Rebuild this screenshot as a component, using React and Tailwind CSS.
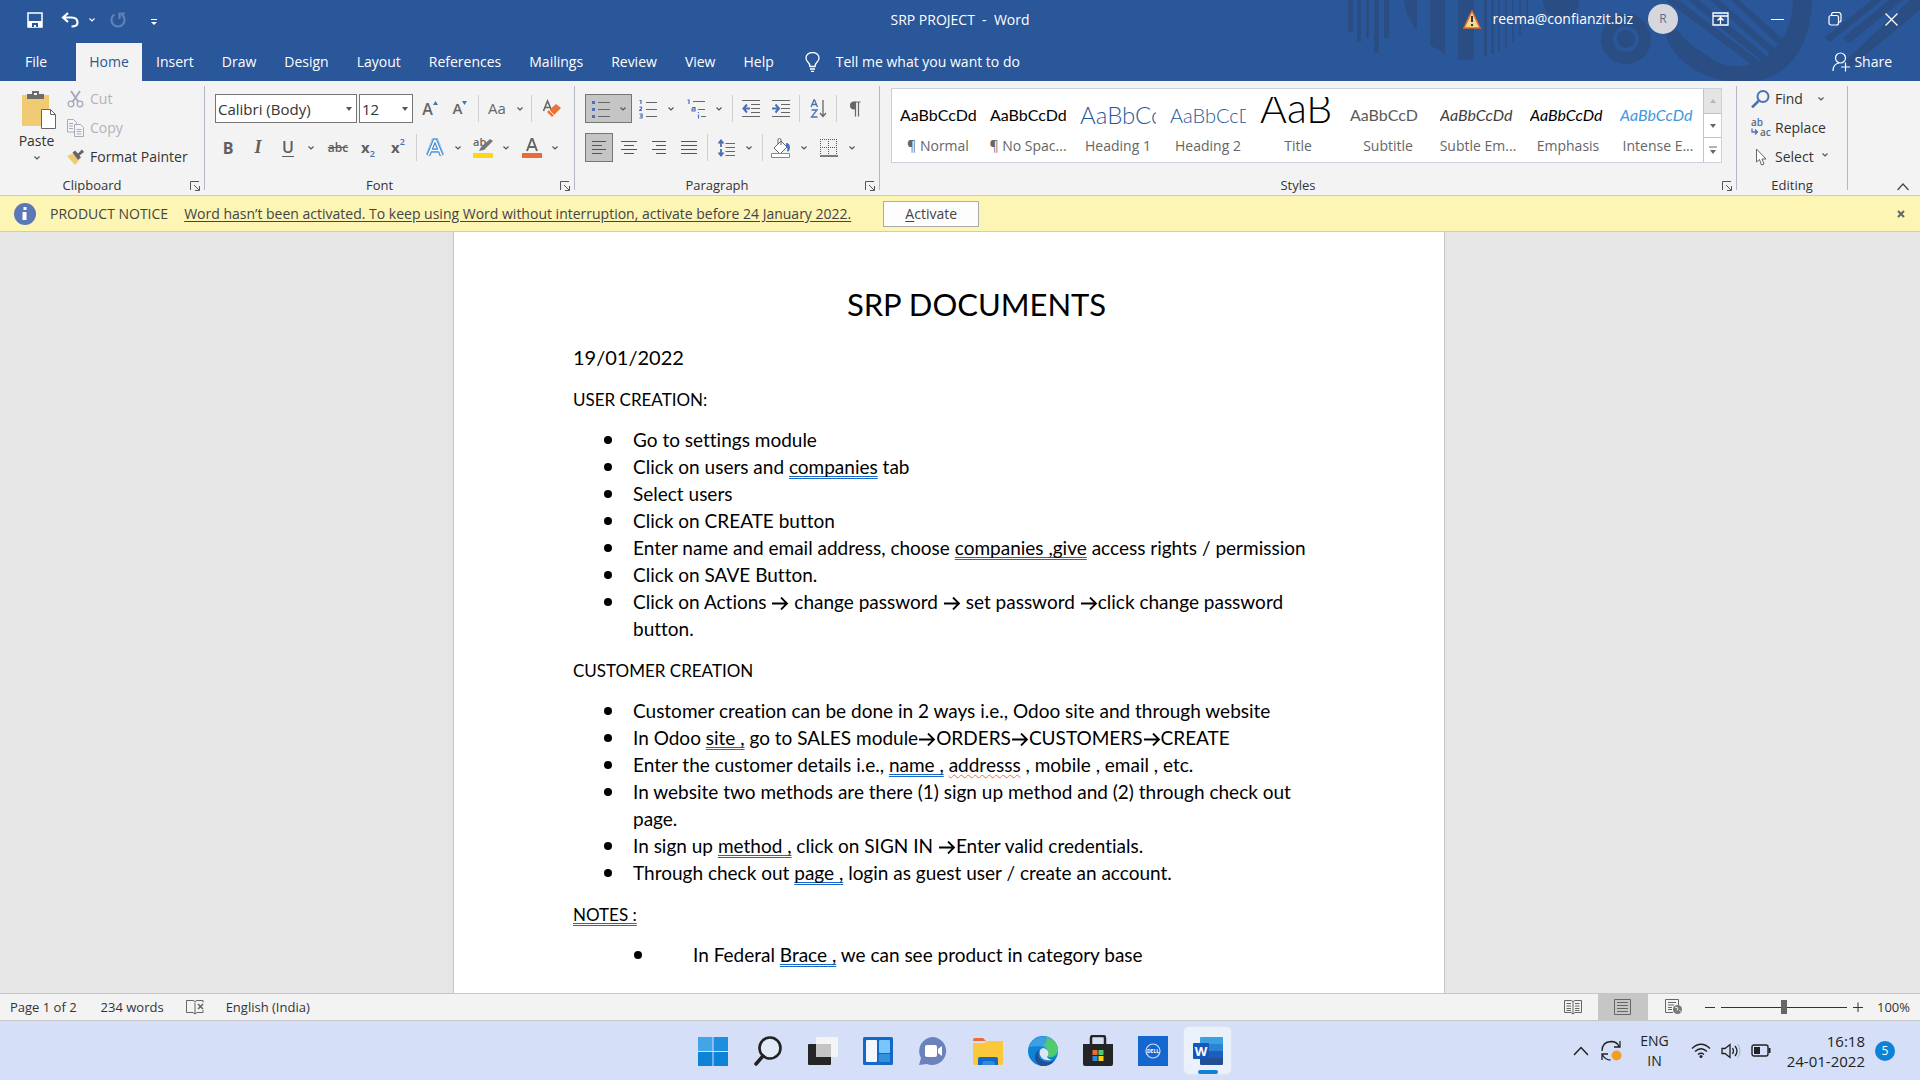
import React from "react";

const tabs = ["Insert", "Draw", "Design", "Layout", "References", "Mailings", "Review", "View", "Help"];

const styleCards = [
  { name: "¶ Normal", sample: "AaBbCcDd", look: "text-[16px] leading-[36px] text-black" },
  { name: "¶ No Spac...", sample: "AaBbCcDd", look: "text-[16px] leading-[36px] text-black" },
  { name: "Heading 1", sample: "AaBbCc", look: "text-[24px] leading-[36px] font-light text-[#1f5a9e]" },
  { name: "Heading 2", sample: "AaBbCcD", look: "text-[20px] leading-[36px] font-light text-[#1f5a9e]" },
  { name: "Title", sample: "AaB", look: "text-[41px] leading-[22px] font-light text-black" },
  { name: "Subtitle", sample: "AaBbCcD", look: "text-[16px] leading-[36px] text-[#5a5a5a]" },
  { name: "Subtle Em...", sample: "AaBbCcDd", look: "text-[16px] leading-[36px] italic text-[#404040]" },
  { name: "Emphasis", sample: "AaBbCcDd", look: "text-[16px] leading-[36px] italic text-black" },
  { name: "Intense E...", sample: "AaBbCcDd", look: "text-[16px] leading-[36px] italic text-[#3f97dc]" },
];

function Svg({ w, h, children, className = "" }) {
  return (
    <svg width={w} height={h} viewBox={`0 0 ${w} ${h}`} fill="none" className={`shrink-0 ${className}`}>
      {children}
    </svg>
  );
}

function Chevron({ className = "text-[#555]" }) {
  return (
    <Svg w={6} h={4} className={className}>
      <path d="M.5.5 3 3 5.5.5" stroke="currentColor" strokeWidth="1.2" />
    </Svg>
  );
}

function Tool({ label, children, active }) {
  return (
    <button
      aria-label={label}
      className={
        active
          ? "flex h-[29px] w-7 items-center justify-center border border-[#767676] bg-[#c5c5c5]"
          : "flex h-[29px] w-[30px] items-center justify-center"
      }
    >
      {children}
    </button>
  );
}

function Split({ label, children, active }) {
  return (
    <button
      aria-label={label}
      className={
        active
          ? "flex h-[29px] w-[47px] items-center border border-[#767676] bg-[#c5c5c5]"
          : "flex h-[29px] w-[46px] items-center"
      }
    >
      <span className="flex w-[30px] items-center justify-center">{children}</span>
      <span className="flex w-4 items-center justify-center">
        <Chevron />
      </span>
    </button>
  );
}

function Bar() {
  return <span className="mx-[3px] h-[27px] w-px bg-[#d0d0d4]" />;
}

function Launcher({ label }) {
  return (
    <button aria-label={label} className="absolute right-1 bottom-1">
      <Svg w={10} h={10}>
        <path d="M.5 9V.5H9M4 4l5 5M9.5 5v4.5H5" stroke="#555" />
      </Svg>
    </button>
  );
}

function Group({ title, launcher, className = "", children }) {
  return (
    <section className={`flex items-stretch ${className}`}>
      <div className="relative flex min-w-0 flex-1 flex-col pb-px">
        <div className="flex-1">{children}</div>
        <h2 className={`text-center text-[13px] leading-[18px] text-[#333] ${launcher ? "pr-5" : ""}`}>{title}</h2>
        {launcher && <Launcher label={`${title} settings`} />}
      </div>
      <div className="my-[5px] w-px bg-[#b4b8c4]" />
    </section>
  );
}

function Combo({ label, value, className }) {
  return (
    <div className={`relative mr-[2px] ${className}`}>
      <select
        aria-label={label}
        defaultValue={value}
        className="h-[29px] w-full appearance-none border border-[#767676] bg-white pl-[2px] text-[15px] leading-5 text-[#333]"
      >
        <option>{value}</option>
      </select>
      <Svg w={6} h={4} className="pointer-events-none absolute top-[13px] right-[5px]">
        <path d="M0 0h6L3 4z" fill="#555" />
      </Svg>
    </div>
  );
}

function TitleArt() {
  return (
    <svg width="580" height="81" viewBox="0 0 580 81" className="absolute top-0 right-0" fill="#2a4d83">
      <path d="M8 0h5v32H8zM17 0h4v42h-4zM26 0h3v38h-3zM34 0h5v53h-5zM44 0h5v38h-5zM64 0h13v30Q66 18 64 0z" />
      <path d="M90 0h15v54l-15-9zM118 0h16v60h-16zM144 0h3v56h-3zM151 0h3v54h-3zM158 0h2v51h-2zM165 0h2v48h-2zM172 0h2v42h-2zM179 0h2v36h-2zM186 0h2v26h-2z" />
      <path d="M203 0h36q0 17-18 19-17-2-18-19z" />
      <circle cx="286" cy="39" r="19" fill="none" stroke="#2a4d83" strokeWidth="12" />
      <circle cx="286" cy="39" r="9" />
      <path d="M324 30q8 32 46 47 28 9 58 1 42-18 44-78h-19q-1 41-34 62-30 11-51-6-24-14-30-26z" />
      <path d="M326 0h12l88 66-6 5zM348 0h10l76 62-5 5zM370 0h9l62 54-5 5zM391 0h8l49 44-5 5z" />
      <path d="m532 0-48 38 6 4 52-42zM549 0l-46 38 6 5 54-43zM570 0l-66 62 7 5 69-57V0z" />
    </svg>
  );
}

function TitleBar() {
  return (
    <div className="relative flex h-[43px] items-center text-white">
      <div className="flex flex-1 items-center pb-[3px]">
        <button aria-label="Save" className="ml-[27px]">
          <Svg w={16} h={16}>
            <path d="M1 1h14v14H1z" stroke="#fff" strokeWidth="1.5" />
            <path d="M1 9h14v6H1z" fill="#fff" />
            <path d="M5 11h6v4H9v-2H7v2H5z" fill="#2a569a" />
          </Svg>
        </button>
        <button aria-label="Undo" className="ml-[18px]">
          <Svg w={18} h={16}>
            <path d="M7 1 2 5.5 7 10M2.5 5.5h8q6 0 6 5 0 4-6 4" stroke="#fff" strokeWidth="2.2" />
          </Svg>
        </button>
        <button aria-label="Undo list" className="ml-[10px]">
          <Chevron className="text-white" />
        </button>
        <button aria-label="Redo" className="ml-[15px]">
          <Svg w={16} h={16}>
            <path d="M4.5 2.5A6.5 6.5 0 1 0 11.5 2.5M9.500 7V1.500H15" stroke="#5f80b8" strokeWidth="2.2" />
          </Svg>
        </button>
        <button aria-label="Customize toolbar" className="ml-[25px] pt-1">
          <Svg w={6} h={7}>
            <path d="M0 .5h6" stroke="#fff" />
            <path d="M0 3h6L3 6z" fill="#fff" />
          </Svg>
        </button>
      </div>
      <h1 className="pb-[3px] text-[14px] leading-5 whitespace-pre">SRP PROJECT  -  Word</h1>
      <div className="flex flex-1 items-center justify-end pb-[5px]">
        <Svg w={18} h={19}>
          <path d="M9 1l8 17H1z" fill="#f3d98a" stroke="#e0692f" strokeWidth="1.5" />
          <path d="M9 6v6M9 14v2" stroke="#333" strokeWidth="2" />
        </Svg>
        <span className="ml-3 text-[14px] leading-5">reema@confianzit.biz</span>
        <span className="ml-[15px] flex size-[30px] items-center justify-center rounded-full bg-[#d5d7dd] text-[12px] text-[#5f6d88]">
          R
        </span>
        <button aria-label="Ribbon display options" className="ml-[34px]">
          <Svg w={17} h={14}>
            <path d="M1 1h15v12H1zM1 4h15M8.5 12V6M5.5 8.5l3-3 3 3" stroke="#fff" strokeWidth="1.3" />
          </Svg>
        </button>
        <button aria-label="Minimize" className="ml-[42px]">
          <Svg w={13} h={13}>
            <path d="M0 6.5h13" stroke="#fff" />
          </Svg>
        </button>
        <button aria-label="Restore" className="ml-[44px]">
          <Svg w={14} h={14}>
            <rect x="1" y="3.5" width="9.5" height="9.5" rx="2" stroke="#fff" strokeWidth="1.2" />
            <path d="M3.5 3q0-2.500 2-2.500h5q2.500 0 2.500 2.500v5q0 2-2 2" stroke="#fff" strokeWidth="1.2" />
          </Svg>
        </button>
        <button aria-label="Close" className="mr-[22px] ml-[43px]">
          <Svg w={13} h={13}>
            <path d="m.5.5 12 12M12.500.5l-12 12" stroke="#fff" strokeWidth="1.3" />
          </Svg>
        </button>
      </div>
    </div>
  );
}

function TabRow() {
  return (
    <nav className="relative flex h-[38px] items-stretch text-[14px] leading-5 text-white">
      <button className="w-[76px] pr-1">File</button>
      <button className="w-[66px] bg-[#f3f3f3] text-[#2a569a]">Home</button>
      {tabs.map((t) => (
        <button key={t} className="px-[14px]">
          {t}
        </button>
      ))}
      <button className="ml-[17px] flex items-center gap-4">
        <Svg w={15} h={20}>
          <path
            d="M5 14.500Q5 12 2.500 9.500 1 8 1 6a6.500 5.500 0 0 1 13 0q0 2-1.500 3.500Q10 12 10 14.500zM5 17h5M6 19.300h3"
            stroke="#fff"
            strokeWidth="1.3"
          />
        </Svg>
        Tell me what you want to do
      </button>
      <button className="mr-[28px] ml-auto flex items-center gap-1">
        <Svg w={18} h={20}>
          <circle cx="8.5" cy="6" r="5" stroke="#fff" strokeWidth="1.2" />
          <path d="M1 19q0-7 6-8M13.500 10.500v9M9 15h9" stroke="#fff" strokeWidth="1.2" />
        </Svg>
        Share
      </button>
    </nav>
  );
}

function Clipboard() {
  return (
    <Group title="Clipboard" launcher className="w-[205px]">
      <div className="flex">
        <button className="flex w-[67px] flex-col items-center pt-[9px] pl-[6px] text-[14px] leading-5 text-[#333]">
          <Svg w={36} h={39} className="ml-1">
            <path d="M1 5h27v31H1z" fill="#f0cb74" />
            <path d="M6 9V4h5V1h7v3h5v5z" fill="#6d6d6d" />
            <path d="M13 3h3v2h-3z" fill="#f3f3f3" />
            <path d="M20.500 19.500h9l5 5v14h-14z" fill="#fff" stroke="#666" />
            <path d="M29.500 19.500v5h5" stroke="#666" />
          </Svg>
          <span className="pt-[2px]">Paste</span>
          <span className="pt-[5px]">
            <Chevron />
          </span>
        </button>
        <div className="flex flex-col pt-[3px] text-[14px] leading-5">
          <button className="flex h-[29px] items-center gap-[6px] text-[#b0b3bd]">
            <Svg w={17} h={18}>
              <path d="M4 1l7.500 11M13 1 5.500 12" stroke="#a6abba" strokeWidth="2" />
              <circle cx="4" cy="14" r="2.8" stroke="#a6abba" strokeWidth="1.3" />
              <circle cx="13" cy="14" r="2.8" stroke="#a6abba" strokeWidth="1.3" />
            </Svg>
            Cut
          </button>
          <button className="flex h-[29px] items-center gap-[6px] text-[#b0b3bd]">
            <Svg w={17} h={18}>
              <path d="M.5.5h6l3 3V13h-9z" fill="#f6f6f6" stroke="#a6abba" />
              <path d="M7.500 5.500h6l3 3v9h-9z" fill="#f6f6f6" stroke="#a6abba" />
              <path d="M2 4.500h4M2 7h4M2 9.500h4M9.500 10.500h5M9.500 12.500h5M9.500 15h5" stroke="#a6abba" />
            </Svg>
            Copy
          </button>
          <button className="flex h-[29px] items-center gap-[6px] text-[#333]">
            <Svg w={17} h={16}>
              <path d="M0 7 6 4.500l6 6.500-4 5z" fill="#f0cb74" />
              <path d="m5.500 3.500 2.500-2 3 3L15 .5 17 3l-4.500 3.500 1.500 2-3 2.500z" fill="#666" />
            </Svg>
            Format Painter
          </button>
        </div>
      </div>
    </Group>
  );
}

function FontGroup() {
  return (
    <Group title="Font" launcher className="w-[370px]">
      <div className="flex items-center pt-[13px] pl-[10px] text-[#666]">
        <Combo label="Font name" value="Calibri (Body)" className="w-[142px]" />
        <Combo label="Font size" value="12" className="w-[54px]" />
        <Tool label="Grow font">
          <span className="text-[16px] font-semibold">A</span>
          <Svg w={5} h={16}>
            <path d="M0 4h5L2.500 0z" fill="#4a70b5" />
          </Svg>
        </Tool>
        <Tool label="Shrink font">
          <span className="text-[15px] font-semibold">A</span>
          <Svg w={5} h={16}>
            <path d="M0 0h5L2.500 4z" fill="#4a70b5" />
          </Svg>
        </Tool>
        <Bar />
        <Split label="Change case">
          <span className="text-[15px]">Aa</span>
        </Split>
        <Bar />
        <span className="w-[2px]" />
        <Tool label="Clear formatting">
          <Svg w={20} h={20}>
            <path d="M1.500 12 5.500 2 9 10M3 8.500h5" stroke="#666" strokeWidth="1.6" />
            <path d="m14 5 5 4-9 9-5-5z" fill="#e8743b" />
            <path d="m7 11 5 5" stroke="#f3f3f3" />
          </Svg>
        </Tool>
      </div>
      <div className="flex items-center pt-[10px] pl-2 text-[#5f5f5f]">
        <Tool label="Bold">
          <b className="text-[16px]">B</b>
        </Tool>
        <Tool label="Italic">
          <i className="font-['Liberation_Serif',serif] text-[18px] font-bold">I</i>
        </Tool>
        <Split label="Underline">
          <span className="border-b border-[#5f5f5f] text-[16px] leading-[17px] font-semibold">U</span>
        </Split>
        <span className="w-1" />
        <Tool label="Strikethrough">
          <s className="text-[12px] font-semibold">abc</s>
        </Tool>
        <Tool label="Subscript">
          <b className="text-[15px]">x</b>
          <span className="pt-3 text-[9px] leading-3 font-semibold text-[#4a70b5]">2</span>
        </Tool>
        <Tool label="Superscript">
          <b className="text-[15px]">x</b>
          <span className="pb-3 text-[9px] leading-3 font-semibold text-[#4a70b5]">2</span>
        </Tool>
        <Bar />
        <Split label="Text effects">
          <Svg w={18} h={20}>
            <path d="M2 17.500 8 2h2l6 15.500M5 12.500h8" stroke="#9cc4ec" strokeWidth="5" />
            <path d="M2.500 17 8.500 2.500h1L15.500 17M5 12.500h8" stroke="#3f8ad0" strokeWidth="3.6" />
            <path d="M2.500 17 8.500 2.500h1L15.500 17M5 12.500h8" stroke="#fff" strokeWidth="1.6" />
          </Svg>
        </Split>
        <span className="w-[2px]" />
        <Split label="Highlight colour">
          <Svg w={20} h={20}>
            <text x="0" y="8" fontSize="11" fontWeight="600" fill="#666" fontFamily="Open Sans, sans-serif">
              ab
            </text>
            <path d="m6 13 2-4L17 1l3 2-9 9z" fill="#777" />
            <path d="M0 15h20v5H0z" fill="#ffd613" />
          </Svg>
        </Split>
        <span className="w-[3px]" />
        <Split label="Font colour">
          <Svg w={20} h={20}>
            <path d="M5 13 9.500 1h1L15 13M6.500 9h7" stroke="#666" strokeWidth="2" />
            <path d="M0 15h20v5H0z" fill="#ea6b35" />
          </Svg>
        </Split>
      </div>
    </Group>
  );
}

function Paragraph() {
  return (
    <Group title="Paragraph" launcher className="w-[305px]">
      <div className="flex items-center pt-[13px] pl-[10px]">
        <Split label="Bullets" active>
          <Svg w={18} h={18}>
            <path d="M6 2.500h12M6 9.500h12M6 16.500h12" stroke="#666" />
            <path d="M0 1h3v3H0zM0 8h3v3H0zM0 15h3v3H0z" fill="#4a70b5" />
          </Svg>
        </Split>
        <span className="w-px" />
        <Split label="Numbering">
          <Svg w={18} h={20}>
            <path d="M7 3.500h11M7 10.500h11M7 17.500h11" stroke="#666" />
            <path d="M.5 1.500H2V5M.5 8h2v1.500l-2 2H3M.5 15h2.500v4H.5M1 17h2" stroke="#4a70b5" strokeWidth="1.2" />
          </Svg>
        </Split>
        <span className="w-[2px]" />
        <Split label="Multilevel list">
          <Svg w={19} h={20}>
            <path d="M6 2.500h12M11 10.500h7M14 17.500h5" stroke="#666" />
            <path d="M.5 1H2v4M5 8.500h3V12H5v-2h3M11.500 15.500v4M11.500 13v1" stroke="#4a70b5" strokeWidth="1.2" />
          </Svg>
        </Split>
        <span className="w-[2px]" />
        <Bar />
        <Tool label="Decrease indent">
          <Svg w={18} h={17}>
            <path d="M0 .5h18M9 4.500h9M9 8.500h9M9 12.500h9M0 16.500h18" stroke="#666" />
            <path d="M5 4.500 1.500 8.500 5 12.500M2 8.500h6" stroke="#4a70b5" strokeWidth="2" />
          </Svg>
        </Tool>
        <Tool label="Increase indent">
          <Svg w={18} h={17}>
            <path d="M0 .5h18M9 4.500h9M9 8.500h9M9 12.500h9M0 16.500h18" stroke="#666" />
            <path d="M3.500 4.500 7 8.500l-3.500 4M0 8.500h6" stroke="#4a70b5" strokeWidth="2" />
          </Svg>
        </Tool>
        <Bar />
        <Tool label="Sort">
          <Svg w={17} h={19}>
            <path d="M1 8 4 1h.5L7.500 8M2 5.500h5M1.500 11H7l-5.500 7h6" stroke="#4a70b5" strokeWidth="1.3" />
            <path d="M13 1v16M10 14l3 3.500 3-3.500" stroke="#666" strokeWidth="1.3" />
          </Svg>
        </Tool>
        <Bar />
        <Tool label="Show marks">
          <Svg w={12} h={16}>
            <path d="M11.500 1h-6M6.500 1v14.500M9.500 1v14.500" stroke="#666" strokeWidth="1.2" />
            <path d="M6.500.5H5a4 4 0 0 0 0 8h1.500z" fill="#666" />
          </Svg>
        </Tool>
      </div>
      <div className="flex items-center pt-[10px] pl-[10px]">
        <Tool label="Align left" active>
          <Svg w={14} h={13}>
            <path d="M0 .5h14M0 4.500h10M0 8.500h14M0 12.500h10" stroke="#555" />
          </Svg>
        </Tool>
        <span className="w-px" />
        <Tool label="Centre">
          <Svg w={16} h={13}>
            <path d="M0 .5h16M3 4.500h10M0 8.500h16M3 12.500h10" stroke="#555" />
          </Svg>
        </Tool>
        <Tool label="Align right">
          <Svg w={14} h={13}>
            <path d="M0 .5h14M4 4.500h10M0 8.500h14M4 12.500h10" stroke="#555" />
          </Svg>
        </Tool>
        <Tool label="Justify">
          <Svg w={16} h={13}>
            <path d="M0 .5h16M0 4.500h16M0 8.500h16M0 12.500h16" stroke="#555" />
          </Svg>
        </Tool>
        <Bar />
        <Split label="Line spacing">
          <Svg w={17} h={18}>
            <path d="M7.500 4.500H17M7.500 8.500H17M7.500 12.500H17M7.500 16.500H17" stroke="#666" />
            <path d="M3 2v6M3 10v6M.5 4.500 3 1.500l2.500 3M.5 13.500l2.500 3 2.500-3" stroke="#4a70b5" strokeWidth="1.8" />
          </Svg>
        </Split>
        <span className="w-[2px]" />
        <Bar />
        <Split label="Shading">
          <Svg w={20} h={20}>
            <path d="m3 10 7-7 6 6-7 7zM7 6V2q0-1.500 1.500-1.500T10 2v5" fill="#fff" stroke="#666" />
            <path d="M15 5q4 0 4 5-1 5-3 3 1-4-1-4z" fill="#4a70b5" />
            <path d="M.5 15.500h18v4H.5z" fill="#fff" stroke="#888" />
          </Svg>
        </Split>
        <span className="w-[2px]" />
        <Split label="Borders">
          <Svg w={18} h={18}>
            <path d="M0 .5h18M.5 0v16M8.500 0v16M16.500 0v16M0 8.500h18" stroke="#555" strokeDasharray="1 1" />
            <path d="M0 17h18" stroke="#555" strokeWidth="1.5" />
          </Svg>
        </Split>
      </div>
    </Group>
  );
}

function StylesGroup() {
  return (
    <Group title="Styles" launcher className="min-w-0 flex-1">
      <div className="mt-[7px] mr-[14px] ml-[11px] flex h-[75px] border border-[#cdd0d8] bg-white">
        <div className="flex flex-1 pl-px">
          {styleCards.map((s) => (
            <button key={s.name} className="flex w-[90px] flex-col items-center pt-2">
              <span
                className={`h-8 w-[76px] overflow-hidden text-left font-['Lato',sans-serif] whitespace-nowrap ${s.look}`}
              >
                {s.sample}
              </span>
              <span className="pt-[6px] text-[14px] leading-[22px] text-[#666]">{s.name}</span>
            </button>
          ))}
        </div>
        <div className="flex w-[18px] flex-col divide-y divide-[#c0c2c8] border-l border-[#c0c2c8]">
          <button aria-label="Previous styles" className="flex flex-1 items-center justify-center bg-[#e4e4e4]">
            <Svg w={6} h={4}>
              <path d="M0 4h6L3 0z" fill="#b5b5b5" />
            </Svg>
          </button>
          <button aria-label="Next styles" className="flex flex-1 items-center justify-center">
            <Svg w={6} h={4}>
              <path d="M0 0h6L3 4z" fill="#666" />
            </Svg>
          </button>
          <button aria-label="All styles" className="flex flex-1 items-center justify-center">
            <Svg w={8} h={9}>
              <path d="M0 1h8" stroke="#666" />
              <path d="M1 4h6L4 8z" fill="#666" />
            </Svg>
          </button>
        </div>
      </div>
    </Group>
  );
}

function Editing() {
  return (
    <Group title="Editing" className="w-[111px]">
      <div className="flex flex-col pt-[3px] pl-[14px] text-[14px] leading-5 text-[#333]">
        <button className="flex h-[29px] items-center gap-1">
          <Svg w={20} h={18}>
            <circle cx="12" cy="6.5" r="5.5" stroke="#4a70b5" strokeWidth="2" />
            <path d="m8 10.500-7 7" stroke="#4a70b5" strokeWidth="2.5" />
          </Svg>
          Find
          <span className="pl-[11px]">
            <Chevron />
          </span>
        </button>
        <button className="flex h-[29px] items-center gap-1">
          <Svg w={20} h={19}>
            <text x="0" y="8" fontSize="10" fontWeight="600" fill="#666" fontFamily="Open Sans, sans-serif">
              a<tspan fill="#4a70b5">b</tspan>
            </text>
            <text x="9" y="18" fontSize="10" fontWeight="600" fill="#666" fontFamily="Open Sans, sans-serif">
              a<tspan fill="#4a70b5">c</tspan>
            </text>
            <path d="M1 10.500V14h5M4 11.500 6.500 14 4 16.500" stroke="#4a70b5" strokeWidth="1.3" />
          </Svg>
          Replace
        </button>
        <button className="flex h-[29px] items-center gap-1">
          <Svg w={20} h={18}>
            <path d="M5.500 1v13l3-2.500 2 5.500 2.500-1-2-5h4z" fill="#fff" stroke="#666" />
          </Svg>
          Select
          <span className="pb-1 pl-1">
            <Chevron />
          </span>
        </button>
      </div>
    </Group>
  );
}

function Notice() {
  return (
    <div className="flex h-[37px] items-center border-y border-[#d9d18a] bg-[#fcf5b4] text-[14px] leading-5 text-[#444]">
      <Svg w={22} h={22} className="ml-[14px]">
        <circle cx="11" cy="11" r="11" fill="#5a78b8" />
        <path d="M9.500 4h3v3h-3zM8.500 9h4v8h-4z" fill="#fff" />
      </Svg>
      <span className="ml-[14px]">PRODUCT NOTICE</span>
      <a href="#activate" className="ml-4 underline underline-offset-2">
        Word hasn’t been activated. To keep using Word without interruption, activate before 24 January 2022.
      </a>
      <button className="ml-8 h-[26px] w-24 border border-[#ababab] bg-[#fdfdfd] leading-5">
        <span className="underline underline-offset-2">A</span>ctivate
      </button>
      <button aria-label="Close notice" className="mr-[15px] ml-auto">
        <Svg w={8} h={8}>
          <path d="m1 1 6 6M7 1 1 7" stroke="#666" strokeWidth="2" />
        </Svg>
      </button>
    </div>
  );
}

// grammar mark: blue double line under the words
function G({ children }) {
  return (
    <span className="underline decoration-[#1c68c8] decoration-double decoration-1 underline-offset-2 [text-decoration-skip-ink:none]">
      {children}
    </span>
  );
}

function Arrow() {
  return (
    <Svg w={18} h={13} className="inline-block align-[-1px]">
      <path d="M1 6.500h15M10 .5l6 6-6 6" stroke="#000" strokeWidth="1.8" />
    </Svg>
  );
}

function Item({ children }) {
  return (
    <li className="relative pl-[60px] before:absolute before:top-[10px] before:left-[31px] before:size-2 before:rounded-full before:bg-black">
      {children}
    </li>
  );
}

function Page() {
  return (
    <main className="flex flex-1 justify-center overflow-hidden bg-[#e6e6e6] pr-[22px]">
      <article className="w-[992px] border-x border-[#c6c6c6] bg-white pr-[118px] pl-[119px] font-['Lato',sans-serif] text-[17px] leading-[27px] text-black [font-variant-ligatures:none]">
        <h1 className="pt-[48px] pl-[54px] text-center text-[31px] leading-[48px]">SRP DOCUMENTS</h1>
        <p className="pt-[14px] text-[20px] leading-[30px]">19/01/2022</p>
        <p className="pt-[14px]">USER CREATION:</p>
        <ul className="pt-[13px] pb-px text-[19px]">
          <Item>Go to settings module</Item>
          <Item>
            Click on users and <G>companies</G> tab
          </Item>
          <Item>Select users</Item>
          <Item>Click on CREATE button</Item>
          <Item>
            Enter name and email address, choose <G>companies ,give</G> access rights / permission
          </Item>
          <Item>Click on SAVE Button.</Item>
          <Item>
            Click on Actions <Arrow /> change password <Arrow /> set password <Arrow />
            click change password button.
          </Item>
        </ul>
        <p className="pt-[14px]">CUSTOMER CREATION</p>
        <ul className="pt-[13px] pb-px text-[19px]">
          <Item>Customer creation can be done in 2 ways i.e., Odoo site and through website</Item>
          <Item>
            In Odoo <G>site ,</G> go to SALES module
            <Arrow />
            ORDERS
            <Arrow />
            CUSTOMERS
            <Arrow />
            CREATE
          </Item>
          <Item>
            Enter the customer details i.e., <G>name ,</G>{" "}
            <span className="underline decoration-[#e8743b] decoration-wavy decoration-1 underline-offset-2 [text-decoration-skip-ink:none]">
              addresss
            </span>{" "}
            , mobile , email , etc.
          </Item>
          <Item>In website two methods are there (1) sign up method and (2) through check out page.</Item>
          <Item>
            In sign up <G>method ,</G> click on SIGN IN <Arrow />
            Enter valid credentials.
          </Item>
          <Item>
            Through check out <G>page ,</G> login as guest user / create an account.
          </Item>
        </ul>
        <p className="pt-[14px]">
          <G>NOTES :</G>
        </p>
        <ul className="pt-[13px] text-[19px]">
          <li className="relative pl-[120px] before:absolute before:top-[10px] before:left-[61px] before:size-2 before:rounded-full before:bg-black">
            In Federal <G>Brace ,</G> we can see product in category base
          </li>
        </ul>
      </article>
    </main>
  );
}

function StatusBar() {
  return (
    <footer className="flex h-7 items-center border-y border-[#c6c6c6] bg-[#f3f3f3] text-[13px] leading-5 text-[#333]">
      <span className="ml-[10px]">Page 1 of 2</span>
      <span className="ml-6">234 words</span>
      <button aria-label="Proofing" className="ml-[22px]">
        <Svg w={18} h={15}>
          <path d="M9 2.500V14M9 1.500 7 .5H.5v12H7l2 1.500 2-1.500M9 1.500 11 .5h6v2M17 10v2.500h-6" stroke="#666" />
          <path d="m12 4 5 5M17 4l-5 5" stroke="#666" strokeWidth="1.6" />
        </Svg>
      </button>
      <span className="ml-[22px]">English (India)</span>
      <div className="ml-auto flex h-full items-center">
        <button aria-label="Read mode">
          <Svg w={18} h={15}>
            <path
              d="M9 2v12M9 1.500 7 .5H.5v12H7l2 1.500 2-1.500h6.500V.5H11zM2.500 3.500H7M2.500 6H7M2.500 8.500H7M2.500 10.500H7M11 3.500h4.500M11 6h4.500M11 8.500h4.500M11 10.500h4.500"
              stroke="#666"
            />
          </Svg>
        </button>
        <button aria-label="Print layout" className="ml-4 flex h-full w-[50px] items-center justify-center bg-[#c6c6c6]">
          <Svg w={17} h={16}>
            <path d="M.5.5h16v15H.5zM3 3.500h11M3 6.500h11M3 9.500h11M3 12.500h11" stroke="#666" />
          </Svg>
        </button>
        <button aria-label="Web layout" className="ml-[17px]">
          <Svg w={18} h={16}>
            <path d="M8 13.500H.5V.5h13V6M3 3.500h8M3 6h6M3 8.500h4M3 10.500h4" stroke="#666" />
            <circle cx="12.5" cy="10.5" r="4.5" fill="#777" />
            <path d="m10 8 3 1-1 2.500M14.500 11l1 1.500" stroke="#f3f3f3" />
          </Svg>
        </button>
        <button aria-label="Zoom out" className="ml-[22px]">
          <Svg w={10} h={10}>
            <path d="M0 5.500h10" stroke="#333" />
          </Svg>
        </button>
        <input
          type="range"
          aria-label="Zoom"
          min="0"
          max="100"
          defaultValue="50"
          className="mx-[6px] h-[14px] w-[126px] appearance-none bg-[linear-gradient(#333,#333)] bg-[length:100%_1px] bg-center bg-no-repeat [&::-webkit-slider-thumb]:h-[14px] [&::-webkit-slider-thumb]:w-[6px] [&::-webkit-slider-thumb]:appearance-none [&::-webkit-slider-thumb]:bg-[#666]"
        />
        <button aria-label="Zoom in">
          <Svg w={10} h={10}>
            <path d="M0 5.500h10M5 .5v10" stroke="#333" />
          </Svg>
        </button>
        <span className="mr-[10px] ml-[14px]">100%</span>
      </div>
    </footer>
  );
}

function TaskbarIcons() {
  const cell = "flex h-[49px] w-[55px] items-center justify-center";
  return (
    <div className="flex">
      <button aria-label="Start" className={cell}>
        <Svg w={30} h={30}>
          <path d="M0 1h14.500v14H0z" fill="#41a5e6" />
          <path d="M15.500 1H30v14H15.500z" fill="#1e8fdc" />
          <path d="M0 16h14.500v14H0zM15.500 16H30v14H15.500z" fill="#0d83d8" />
        </Svg>
      </button>
      <button aria-label="Search" className={cell}>
        <Svg w={28} h={30}>
          <circle cx="16" cy="12" r="10.5" fill="#e4ebf8" stroke="#222" strokeWidth="2.6" />
          <path d="m9 20-7 8" stroke="#222" strokeWidth="3.5" strokeLinecap="round" />
        </Svg>
      </button>
      <button aria-label="Task view" className={cell}>
        <Svg w={30} h={30}>
          <rect y="8" width="23" height="21" rx="1" fill="#252525" />
          <rect x="8" y="1" width="22" height="20" rx="1" fill="#f4f4f4" />
          <path d="M8 8h15v13H8z" fill="#c4c4c4" />
        </Svg>
      </button>
      <button aria-label="Widgets" className={cell}>
        <Svg w={30} h={30}>
          <rect y="1" width="30" height="28" rx="1.5" fill="#1567c8" />
          <rect x="3" y="4" width="11" height="22" rx="1" fill="#f5f7fb" />
          <rect x="16" y="4" width="11" height="13" rx="1" fill="#78c6fb" />
          <rect x="16" y="18" width="11" height="8" rx="1" fill="#3193dc" />
        </Svg>
      </button>
      <button aria-label="Chat" className={cell}>
        <Svg w={30} h={30}>
          <path d="M15 1a14 14 0 1 1-6 27L1 29l2-7A14 14 0 0 1 15 1z" fill="#6c82bc" />
          <rect x="7" y="9" width="12" height="12" rx="2" fill="#fff" />
          <path d="m20 13 4-3v10l-4-3z" fill="#fff" />
        </Svg>
      </button>
      <button aria-label="File Explorer" className={cell}>
        <Svg w={30} h={30}>
          <path d="M0 4q0-2 2-2h8l3 3H0z" fill="#ea6b35" />
          <path d="M0 7h11l3-2h16v22q0 2-2 2H2q-2 0-2-2z" fill="#fbc83c" />
          <path d="M5 29v-6q0-2 2-2h16q2 0 2 2v6z" fill="#1567c8" />
          <path d="M9 29q0-4 3-4h7q3 0 3 4" fill="#2f8ae0" />
        </Svg>
      </button>
      <button aria-label="Edge" className={cell}>
        <Svg w={30} h={30}>
          <circle cx="15" cy="15" r="15" fill="#0d83d8" />
          <path d="M1 11C4 2 13-1 20 1c7 3 10 8 10 13-1 5-5 8-9 7-3-1 0-3-1-6-2-4-7-6-19-4z" fill="#3da0e0" />
          <path d="M19 1c8 3 11 8 11 13-1 5-5 8-9 7-3-1 0-3-1-6-1-3-3-5-5-6 3-1 4-4 4-8z" fill="#50cb6e" />
          <path d="M12 14c-4 5 0 12 8 12q5 0 8-4c-3 6-8 9-15 8-8-4-8-14-1-16z" fill="#254f95" />
          <path d="M15 12c-5 1-4 8 0 11q4 2 9 1-4-1-5-3 2-2 1-6-2-3-5-3z" fill="#dce6f7" />
        </Svg>
      </button>
      <button aria-label="Store" className={cell}>
        <Svg w={30} h={31}>
          <path d="M8 9V3q0-2 2-2h10q2 0 2 2v6" stroke="#252525" strokeWidth="2.5" />
          <path d="M0 9h30v20q0 2-2 2H2q-2 0-2-2z" fill="#252525" />
          <path d="M9.500 15h5v5h-5z" fill="#ea6b35" />
          <path d="M15.500 15h5v5h-5z" fill="#50cb6e" />
          <path d="M9.500 21h5v5h-5z" fill="#1e8fdc" />
          <path d="M15.500 21h5v5h-5z" fill="#fbd01c" />
        </Svg>
      </button>
      <button aria-label="Dell" className={cell}>
        <Svg w={30} h={30}>
          <path d="M0 0h30v30H0z" fill="#1567d0" />
          <circle cx="15" cy="15" r="7" stroke="#cfe0f6" strokeWidth="1.2" />
          <text x="15" y="17" fontSize="5" fontWeight="700" fill="#fff" textAnchor="middle" fontFamily="Open Sans, sans-serif">
            DELL
          </text>
        </Svg>
      </button>
      <button
        aria-label="Word"
        className="relative mx-[3px] flex h-[49px] w-[49px] items-center justify-center rounded-md border border-[#dde4f0] bg-[#eaf1fb]"
      >
        <Svg w={30} h={30}>
          <path d="M7 2q0-1 1-1h21q1 0 1 1v7H7z" fill="#3da0e0" />
          <path d="M7 8h23v7H7z" fill="#2b83d3" />
          <path d="M7 15h23v7H7z" fill="#1a5fbe" />
          <path d="M7 22h23v6q0 1-1 1H8q-1 0-1-1z" fill="#254f95" />
          <rect y="7" width="16" height="16" rx="1" fill="#1558b8" />
          <text x="8" y="20" fontSize="13" fontWeight="700" fill="#fff" textAnchor="middle" fontFamily="Open Sans, sans-serif">
            W
          </text>
        </Svg>
        <span className="absolute bottom-0 left-[14px] h-1 w-5 rounded-full bg-[#0d83d8]" />
      </button>
    </div>
  );
}

function Taskbar() {
  return (
    <div className="flex h-[59px] items-center bg-[#d5dff7] text-[14px] leading-5 text-[#222]">
      <div className="flex-1" />
      <TaskbarIcons />
      <div className="flex flex-1 items-center justify-end">
        <button aria-label="Hidden icons">
          <Svg w={16} h={10}>
            <path d="m1 9 7-7.500L15 9" stroke="#222" strokeWidth="1.5" />
          </Svg>
        </button>
        <Svg w={21} h={21} className="ml-3">
          <path d="M1 11Q1 2 10 1.500q6 0 8 5M19 1v6h-6M1 20v-6h6M1.500 15q3 5 8 5" stroke="#222" strokeWidth="1.3" />
          <circle cx="15.5" cy="15.5" r="5" fill="#f0a020" />
        </Svg>
        <button className="ml-[18px] text-center">
          ENG
          <br />
          IN
        </button>
        <Svg w={20} h={15} className="ml-[22px]">
          <path d="M1 5.500q9-8.500 18 0M4 8.500q6-5.500 12 0M7 11.500q3-2.500 6 0" stroke="#222" strokeWidth="1.4" />
          <circle cx="10" cy="13.5" r="1.5" fill="#222" />
        </Svg>
        <Svg w={20} h={16} className="ml-[10px]">
          <path d="M1 5.500h3l5-4v13l-5-4H1z" stroke="#222" strokeWidth="1.3" />
          <path d="M11.500 5q2 3 0 6M14 3q4 5 0 10" stroke="#222" strokeWidth="1.3" />
          <path d="M16.500 1q5 7 0 14" stroke="#9bb4c8" />
        </Svg>
        <Svg w={20} h={13} className="ml-[10px]">
          <rect x="1" y="1" width="16" height="11" rx="2" stroke="#222" strokeWidth="1.4" />
          <path d="M3 3h6v7H3zM17.500 4h2v5h-2z" fill="#222" />
        </Svg>
        <button className="ml-4 text-right text-[15px] leading-5">
          16:18
          <br />
          24-01-2022
        </button>
        <span className="mr-[25px] ml-[10px] flex size-5 items-center justify-center rounded-full bg-[#0d83d8] text-[12px] text-white">
          5
        </span>
      </div>
    </div>
  );
}

export default function App() {
  return (
    <div className="flex h-screen flex-col overflow-hidden font-['Open_Sans',sans-serif]">
      <header className="relative bg-[#2a569a]">
        <TitleArt />
        <TitleBar />
        <TabRow />
      </header>
      <div className="relative flex h-[114px] bg-[#f3f3f3]">
        <Clipboard />
        <FontGroup />
        <Paragraph />
        <StylesGroup />
        <Editing />
        <div className="flex w-[72px] items-end justify-end pr-[11px] pb-1">
          <button aria-label="Collapse ribbon">
            <Svg w={12} h={8}>
              <path d="m.5 7 5.500-6 5.500 6" stroke="#444" strokeWidth="1.2" />
            </Svg>
          </button>
        </div>
      </div>
      <Notice />
      <Page />
      <StatusBar />
      <Taskbar />
    </div>
  );
}
